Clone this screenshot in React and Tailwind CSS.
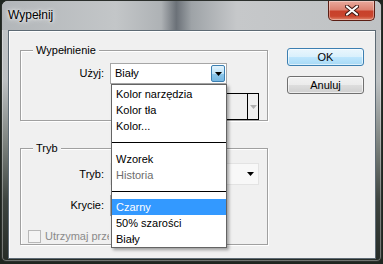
import React from "react";

const font = { fontFamily: '"Liberation Sans", Arial, sans-serif' };

function Arrow({ color = "#000" }) {
  return (
    <svg width="7" height="4" viewBox="0 0 7 4">
      <path d="M0 0h7L3.5 4z" fill={color} />
    </svg>
  );
}

function CloseX() {
  return (
    <svg width="14" height="11" viewBox="0 0 14 11">
      <path d="M2 1.5l10 8M12 1.5l-10 8" stroke="#3a1510" strokeWidth="4" strokeLinecap="round" />
      <path d="M2 1.5l10 8M12 1.5l-10 8" stroke="#fff" strokeWidth="2.2" strokeLinecap="round" />
    </svg>
  );
}

function Group({ title, className, children }) {
  return (
    <div className={`border border-[#a0a0a0] shadow-[inset_1px_1px_0_#fff,1px_1px_0_#fff] ${className}`}>
      <div className="-mt-[7px] ml-[12px] w-fit bg-[#f0f0f0] px-[3px] leading-[13px]">{title}</div>
      {children}
    </div>
  );
}

const items = [
  { label: "Kolor narzędzia" },
  { label: "Kolor tła" },
  { label: "Kolor..." },
  { sep: true, h: "h-[17px]" },
  { label: "Wzorek" },
  { label: "Historia", disabled: true },
  { sep: true, h: "h-[16px]" },
  { label: "Czarny", active: true },
  { label: "50% szarości" },
  { label: "Biały" },
];

function UseList() {
  return (
    <div className="absolute left-0 top-[20px] z-10 w-[116px] border border-[#646464] bg-white pt-[1px] shadow-[2px_2px_3px_rgba(0,0,0,0.35)]">
      {items.map((it, i) =>
        it.sep ? (
          <div key={i} className={`flex items-center ${it.h}`}>
            <div className="h-px w-full bg-black" />
          </div>
        ) : (
          <div
            key={i}
            className={`h-[16px] pl-[4px] leading-[16px] ${
              it.active ? "bg-[#3399ff] text-white" : it.disabled ? "text-[#6d6d6d]" : "text-black"
            }`}
          >
            {it.label}
          </div>
        )
      )}
    </div>
  );
}

export default function App() {
  return (
    <div className="h-[264px] w-[383px] overflow-hidden bg-[#1f2620] text-[11px] text-black" style={font}>
      <div className="ml-[1px] flex h-[262px] w-[381px] flex-col rounded-t-[7px] rounded-b-[5px] border border-[#2b2f2c] bg-[linear-gradient(to_bottom,#c3c6c8_0,#bcc0c2_80px,#7f8581_140px,#3d443f_200px,#262c27_100%)] shadow-[inset_0_0_0_1px_rgba(255,255,255,0.35)]">
        <div className="flex h-[29px] items-start justify-between rounded-t-[6px] bg-[linear-gradient(to_right,#b2b6b9_0,#c3c6c8_30%,#aeb2b5_42%,#6b7178_46%,#9ea3a7_50%,#c6c8ca_62%,#bfc2c4_100%)] pl-[6px] pr-[6px]">
          <div className="mt-[7px] text-[12px] leading-[15px] [text-shadow:0_0_6px_#fff,0_0_3px_#fff]">Wypełnij</div>
          <div className="flex h-[20px] w-[47px] items-center justify-center rounded-b-[5px] border border-t-0 border-[#5a1d13] bg-[linear-gradient(to_bottom,#e9a99c_0,#dc8372_45%,#c8412b_55%,#c9452d_80%,#e0866d_100%)] shadow-[inset_0_0_0_1px_rgba(255,255,255,0.35)]">
            <CloseX />
          </div>
        </div>

        <div className="ml-[6px] flex h-[229px] w-[368px] border border-[#5d6a74] bg-[#f0f0f0] pl-[11px] shadow-[inset_1px_1px_0_#fff]">
          <div className="flex w-[248px] flex-col pt-[19px]">
            <Group title="Wypełnienie" className="h-[71px]">
              <div className="mt-[6px] flex items-center">
                <div className="w-[85px] pr-[2px] text-right">Użyj:</div>
                <div className="relative ml-[4px] flex h-[21px] w-[117px] items-center border border-[#a6a6a6] bg-white">
                  <span className="pl-[4px]">Biały</span>
                  <div className="ml-auto mr-[1px] flex h-[17px] w-[14px] items-center justify-center rounded-[2px] border border-[#3c7fb1] bg-[linear-gradient(to_bottom,#e3f3fc_0,#bde2f7_50%,#8fc8ea_51%,#76b7e2_100%)]">
                    <Arrow />
                  </div>
                  <UseList />
                </div>
              </div>
              <div className="ml-[204px] mt-[9px] flex h-[27px] w-[34px] border border-black">
                <div className="w-[22px] border-r border-black" />
                <div className="flex flex-1 items-center justify-center">
                  <Arrow color="#b0b0b0" />
                </div>
              </div>
            </Group>

            <Group title="Tryb" className="mt-[27px] h-[97px]">
              <div className="mt-[8px] flex items-center">
                <div className="w-[85px] pr-[2px] text-right">Tryb:</div>
                <div className="ml-[4px] flex h-[22px] w-[149px] items-center border border-[#e3e3e3] bg-[#f8f8f8]">
                  <div className="ml-auto mr-[4px]">
                    <Arrow />
                  </div>
                </div>
              </div>
              <div className="mt-[10px] flex h-[21px] items-center">
                <div className="w-[85px] pr-[2px] text-right">Krycie:</div>
                <div className="ml-[4px] h-[21px] w-[40px] border border-[#a6a6a6] bg-white" />
              </div>
              <div className="ml-[7px] mt-[12px] flex items-center">
                <div className="h-[13px] w-[13px] border border-[#b8b8b8] bg-[#f4f4f4]" />
                <span className="ml-[4px] w-[64px] overflow-hidden whitespace-nowrap text-[#8a8a8a]">Utrzymaj przezroczystość</span>
              </div>
            </Group>
          </div>

          <div className="ml-[19px] flex flex-col gap-[10px] pt-[17px]">
            <div className="flex h-[18px] w-[77px] items-center justify-center rounded-[3px] border border-[#3c7fb1] bg-[linear-gradient(to_bottom,#eaf6fd_0,#d9f0fc_50%,#bee6fd_51%,#a7d9f5_100%)] shadow-[inset_0_0_0_1px_rgba(255,255,255,0.6)]">
              OK
            </div>
            <div className="flex h-[18px] w-[77px] items-center justify-center rounded-[3px] border border-[#707070] bg-[linear-gradient(to_bottom,#f2f2f2_0,#ebebeb_50%,#dddddd_51%,#cfcfcf_100%)] shadow-[inset_0_0_0_1px_rgba(255,255,255,0.6)]">
              Anuluj
            </div>
          </div>
        </div>
      </div>
    </div>
  );
}
